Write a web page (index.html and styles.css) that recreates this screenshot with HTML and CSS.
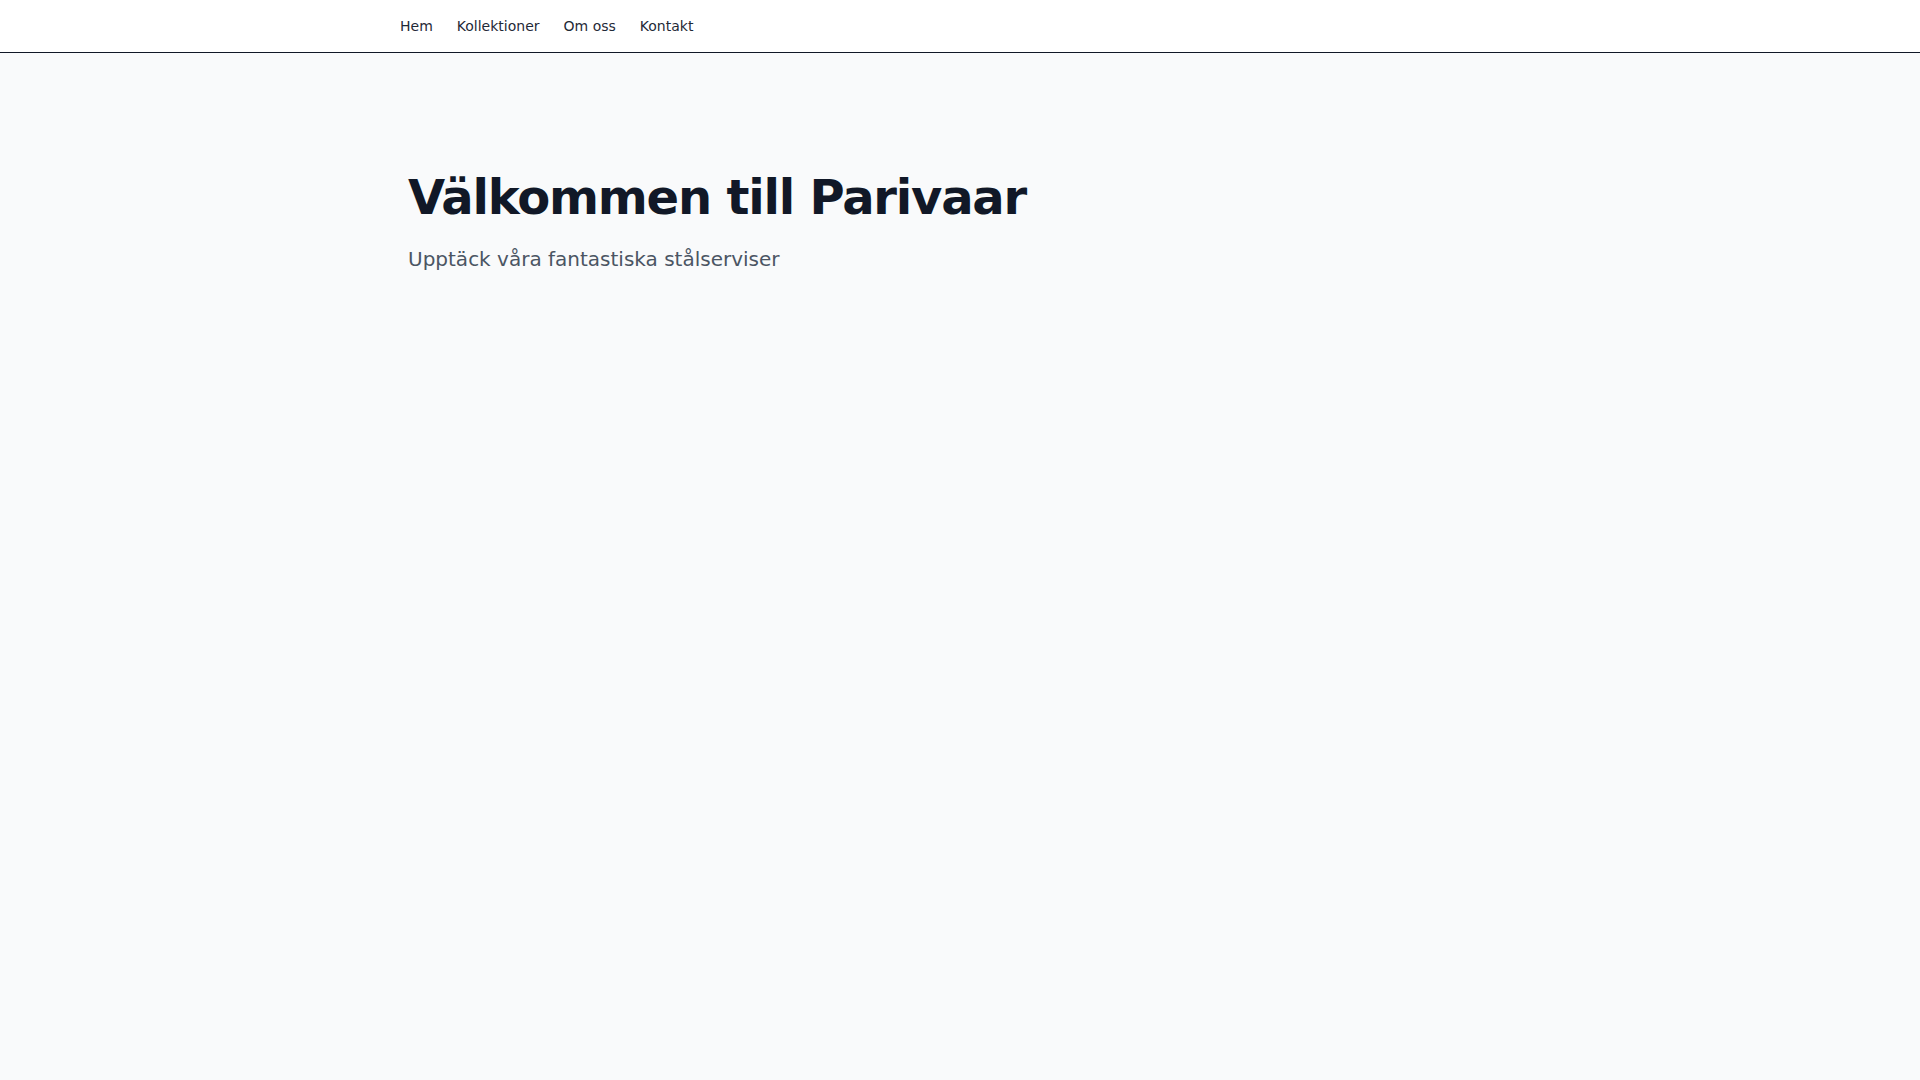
FILE: index.html
```html
<!DOCTYPE html>
<html lang="sv">
<head>
<meta charset="utf-8">
<title>Parivaar</title>
<link rel="stylesheet" href="styles.css">
</head>
<body>
<nav class="nav">
  <div class="nav-inner">
    <a class="nav-link" href="#">Hem</a>
    <a class="nav-link" href="#">Kollektioner</a>
    <a class="nav-link" href="#">Om oss</a>
    <a class="nav-link" href="#">Kontakt</a>
  </div>
</nav>
<main class="main">
  <section class="hero">
    <h1 class="title">Välkommen till Parivaar</h1>
    <p class="subtitle">Upptäck våra fantastiska stålserviser</p>
  </section>
</main>
</body>
</html>
```

FILE: styles.css
```css
html, body {
  margin: 0;
  padding: 0;
}
body {
  font-family: "DejaVu Sans", sans-serif;
  background: #f9fafb;
  color: #111827;
  min-height: 100vh;
}
.nav {
  background: #ffffff;
  border-bottom: 1px solid #111827;
}
.nav-inner {
  max-width: 1120px;
  margin: 0 auto;
  padding: 0 8px;
  height: 52px;
  display: flex;
  align-items: center;
  gap: 24px;
}
.nav-link {
  font-size: 14px;
  color: #1f2937;
  text-decoration: none;
}
.main {
  max-width: 1104px;
  margin: 0 auto;
  padding: 120px 16px 0;
}
.title {
  margin: 0;
  font-size: 48px;
  font-weight: bold;
  letter-spacing: -0.025em;
  line-height: 1;
  color: #111827;
}
.subtitle {
  margin: 24px 0 0;
  font-size: 20px;
  line-height: 28px;
  color: #4b5563;
}
```
